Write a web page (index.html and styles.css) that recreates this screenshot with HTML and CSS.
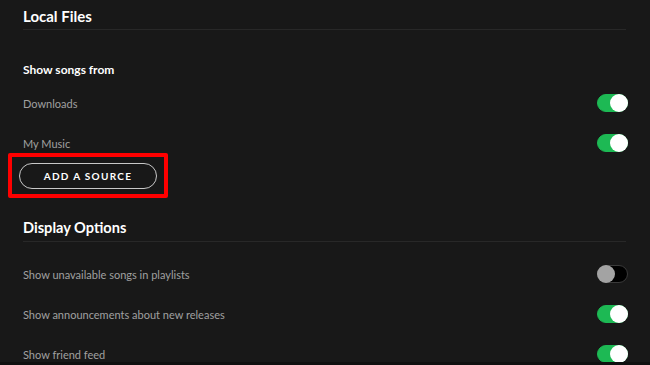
FILE: index.html
```html
<!DOCTYPE html>
<html lang="en">
<head>
    <meta charset="UTF-8">
    <meta name="viewport" content="width=device-width, initial-scale=1.0">
    <title>Settings</title>
    <link rel="stylesheet" href="styles.css">
</head>
<body>
    <div class="settings">
        <!-- Local files -->
        <section class="settings-section">
            <h2>Local Files</h2>
            <h3>Show songs from</h3>
            <div class="setting-row">
                <span>Downloads</span>
                <span class="toggle on"></span>
            </div>
            <div class="setting-row">
                <span>My Music</span>
                <span class="toggle on"></span>
            </div>
            <div class="add-source">
                <button class="pill-button">ADD A SOURCE</button>
                <span class="highlight"></span>
            </div>
        </section>

        <!-- Display options -->
        <section class="settings-section display">
            <h2>Display Options</h2>
            <div class="setting-row">
                <span>Show unavailable songs in playlists</span>
                <span class="toggle"></span>
            </div>
            <div class="setting-row">
                <span>Show announcements about new releases</span>
                <span class="toggle on"></span>
            </div>
            <div class="setting-row">
                <span>Show friend feed</span>
                <span class="toggle on"></span>
            </div>
        </section>
    </div>
    <div class="player-edge"></div>
</body>
</html>
```
FILE: styles.css
```css
body {
    margin: 0;
    background-color: #181818;
    font-family: Lato, "Liberation Sans", sans-serif;
    color: #a0a0a0;
    height: 100vh;
    overflow: hidden;
}
.settings {
    padding: 0 24px 0 23px;
}
.settings-section h2 {
    margin: 0;
    padding: 6px 0 3px;
    line-height: 20px;
    font-size: 15px;
    font-weight: 700;
    color: #fff;
    border-bottom: 1px solid #282828;
}
.settings-section h3 {
    margin: 30px 0 3px;
    line-height: 20px;
    font-size: 12px;
    font-weight: 700;
    color: #fff;
}
.settings-section.display {
    margin-top: 23px;
}
.settings-section.display h2 {
    margin-bottom: 12px;
    font-size: 14.6px;
}
.setting-row {
    display: flex;
    justify-content: space-between;
    align-items: center;
    height: 40px;
    font-size: 11px;
}
.toggle {
    position: relative;
    box-sizing: border-box;
    width: 31px;
    height: 18px;
    margin-right: -2px;
    border-radius: 9px;
    background-color: #000;
    border: 1px solid #3a3a3a;
}
.toggle::after {
    content: "";
    position: absolute;
    top: -1px;
    left: -1px;
    width: 18px;
    height: 18px;
    border-radius: 50%;
    background-color: #a3a3a3;
}
.toggle.on {
    background-color: #1db954;
    border-color: #1db954;
}
.toggle.on::after {
    left: auto;
    right: -1px;
    background-color: #fff;
}
.add-source {
    position: relative;
    width: 138px;
    margin-left: -4px;
}
.pill-button {
    display: block;
    width: 138px;
    height: 26px;
    padding: 0;
    background: transparent;
    border: 1px solid #c8c8c8;
    border-radius: 13px;
    color: #fff;
    font-family: Lato, "Liberation Sans", sans-serif;
    font-size: 10px;
    font-weight: 700;
    letter-spacing: 1.3px;
    cursor: pointer;
}
.highlight {
    position: absolute;
    top: -10px;
    left: -11px;
    right: -11px;
    bottom: -9px;
    border: 4px solid #ff0000;
    border-radius: 2px;
    pointer-events: none;
}
.player-edge {
    position: fixed;
    left: 0;
    right: 0;
    bottom: 0;
    height: 3px;
    background-color: #101010;
}
```
